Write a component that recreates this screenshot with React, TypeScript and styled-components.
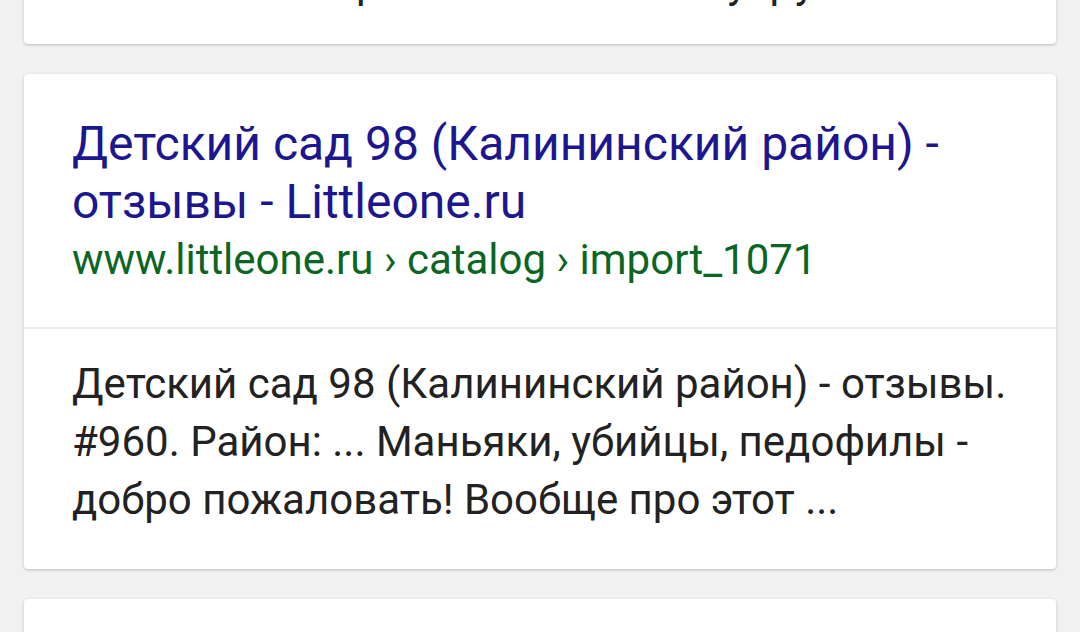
import * as React from "react";
import styled, { createGlobalStyle } from "styled-components";

const GlobalStyle = createGlobalStyle`
  html, body {
    margin: 0;
    padding: 0;
    background: #f1f1f1;
    overflow: hidden;
  }
  body {
    font-family: Roboto, "Noto Sans", Arial, sans-serif;
  }
`;

// scrolled results feed: the first card sits partly above the viewport
const Feed = styled.div`
  display: flex;
  flex-direction: column;
  gap: 30px;
  padding: 0 24px;
  margin-top: -72px;
`;

const Card = styled.div`
  background: #fff;
  border-radius: 4px;
  box-shadow: 0 1px 3px rgba(0, 0, 0, 0.22);
  overflow: hidden;
`;

const Header = styled.div`
  padding: 41px 48px 38px;
  border-bottom: 2px solid #ebebeb;
`;

const Title = styled.a`
  display: block;
  font-size: 48px;
  line-height: 58px;
  color: #1c168f;
  text-decoration: none;
`;

const Url = styled.div`
  font-size: 42px;
  line-height: 58px;
  color: #0b6623;
  white-space: nowrap;
`;

const Snippet = styled.div<{ $cut?: boolean }>`
  padding: ${(p) => (p.$cut ? "26px 48px 32px" : "26px 48px 40px")};
  font-size: 42px;
  line-height: 58px;
  color: #222;
`;

const Gap = styled.span<{ $w: number }>`
  display: inline-block;
  width: ${(p) => p.$w}px;
`;

const Spacer = styled.div`
  height: 200px;
`;

const App = () => {
  return (
    <>
      <GlobalStyle />
      <Feed>
        <Card>
          <Snippet $cut>
            <Gap $w={284} />р<Gap $w={348} />у<Gap $w={22} />р<Gap $w={2} />у
          </Snippet>
        </Card>
        <Card>
          <Header>
            <Title href="#">
              Детский сад 98 (Калининский район) - отзывы - Littleone.ru
            </Title>
            <Url>www.littleone.ru › catalog › import_1071</Url>
          </Header>
          <Snippet>
            Детский сад 98 (Калининский район) - отзывы. #960. Район: ...
            Маньяки, убийцы, педофилы - добро пожаловать! Вообще про этот ...
          </Snippet>
        </Card>
        <Card>
          <Spacer />
        </Card>
      </Feed>
    </>
  );
};

export default App;
